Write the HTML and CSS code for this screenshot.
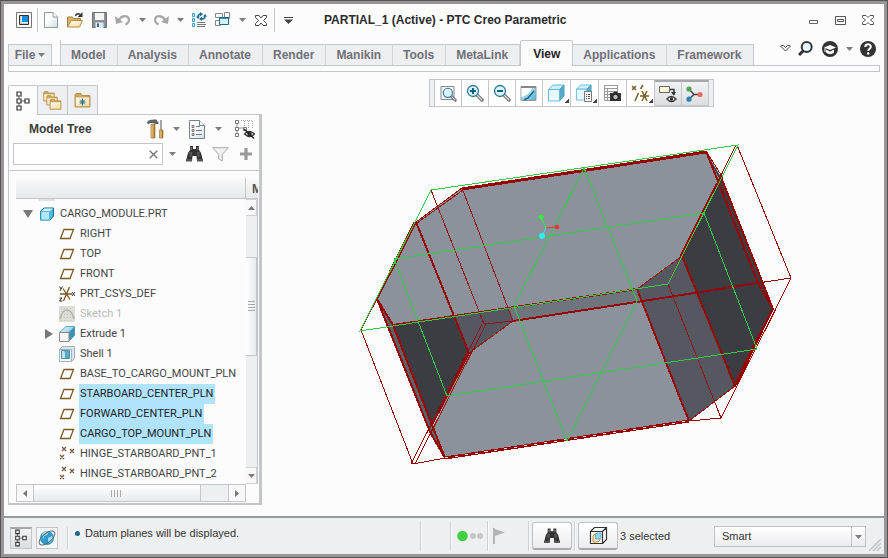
FILE: index.html
```html
<!DOCTYPE html>
<html lang="en">
<head>
<meta charset="utf-8">
<title>PARTIAL_1 (Active) - PTC Creo Parametric</title>
<link rel="stylesheet" href="styles.css">
</head>
<body>
<svg class="defs" aria-hidden="true">
  <defs>
    <linearGradient id="gPaper" x1="0" y1="0" x2="1" y2="1"><stop offset="0.4" stop-color="#fff"/><stop offset="1" stop-color="#cfdde6"/></linearGradient>
    <linearGradient id="gFolder" x1="0" y1="0" x2="1" y2="1"><stop offset="0" stop-color="#fffaf0"/><stop offset="1" stop-color="#f8dc9c"/></linearGradient>
    <linearGradient id="gBlue" x1="0" y1="0" x2="1" y2="1"><stop offset="0" stop-color="#eaf8fd"/><stop offset="1" stop-color="#4fb0d4"/></linearGradient>
    <linearGradient id="gBin" x1="0" y1="0" x2="1" y2="0"><stop offset="0" stop-color="#222"/><stop offset="0.5" stop-color="#999"/><stop offset="1" stop-color="#222"/></linearGradient>
    <linearGradient id="gWood" x1="0" y1="0" x2="1" y2="0"><stop offset="0" stop-color="#f6d48a"/><stop offset="1" stop-color="#a8742a"/></linearGradient>
  </defs>
  <symbol id="caret" viewBox="0 0 7 4"><path d="M0 0h7L3.500 4z" fill="#7d7d7d"/></symbol>
  <symbol id="tree" viewBox="0 0 16 20"><path d="M4 5v10M6 10h5" stroke="#666" stroke-width="1"/><g fill="#fff" stroke="#333" stroke-width="1.200"><path d="M2 1h4v4H2zM2 8h4v4H2zM10 8h4v4h-4zM2 15h4v4H2z"/></g></symbol>
  <symbol id="folder" viewBox="0 0 17 15"><path d="M1 14V1.500L2 .5h5l1 2h8V14z" fill="#cda85e" stroke="#a87f38" stroke-width=".8"/><path d="M1.500 4h14v9.500h-14z" fill="url(#gFolder)" stroke="#c39a52" stroke-width=".7"/></symbol>
  <symbol id="bino" viewBox="0 0 17 16"><path d="M4 0h3v3h3V0h3v4l2 3 2 8h-6l-.5-5h-4L6 15H0l2-8 2-3z" fill="#333"/><path d="M4 1h2v3h-2zM11 1h2v3h-2zM3 6h3l-1 5H1.500zM11 6h3l1.500 5H12z" fill="url(#gBin)"/><path d="M0 13h6v2.500H0zM11 13h6v2.500h-6z" fill="#555"/></symbol>
  <symbol id="plane" viewBox="0 0 16 16"><path d="M5 3.500h9.500L11 12.500H1.500z" fill="#fff" stroke="#7b5a22" stroke-width="1.300"/></symbol>
  <symbol id="points" viewBox="0 0 16 16"><path d="M3 1l4 4M7 1L3 5M11 3l4 4M15 3l-4 4M1 9l4 4M5 9l-4 4" stroke="#75582e" stroke-width="1.300"/></symbol>
  <symbol id="lens" viewBox="0 0 18 18"><path d="M11 11l5 5" stroke="#777" stroke-width="3.500" stroke-linecap="round"/><path d="M11 11l5 5" stroke="#ddd" stroke-width="1.200"/><circle cx="7" cy="7" r="5.500" fill="#d9f3fc" stroke="#2a7896" stroke-width="1.300"/></symbol>
  <symbol id="box" viewBox="0 0 18 18"><path d="M1.500 5.500L6 1h11l-4.500 4.500z" fill="#cdf0fb" stroke="#67bbd9"/><path d="M12.500 5.500L17 1v11l-4.500 5z" fill="#56a9cc" stroke="#4a9dc2"/><path d="M1.500 5.500h11V17h-11z" fill="#e8faff" stroke="#67bbd9"/></symbol>
</svg>

<div class="window">
  <header class="titlebar">
    <button class="app-icon" aria-label="Application menu"><svg width="16" height="16" viewBox="0 0 16 16"><path d="M.5.500h15v15H.5z" fill="#fff" stroke="#777"/><path d="M3.500 3.500h9v9h-9z" fill="#fff" stroke="#333"/><path d="M6 4h6v6H6z" fill="#1690dc"/><path d="M4 4h1.500v6.500H12V12H4z" fill="#c2d4dd"/></svg></button>
    <span class="divider"></span>
    <button class="quick" aria-label="New"><svg width="14" height="16" viewBox="0 0 14 16"><path d="M.5.500h8.500L13.500 5v10.500H.5z" fill="url(#gPaper)" stroke="#8b9aa3"/><path d="M9 .5V5h4.500" fill="#fff" stroke="#8b9aa3"/></svg></button>
    <button class="quick" aria-label="Open"><svg width="16" height="16" viewBox="0 0 16 16"><path d="M.5 15V5h5l1 1.500h7V9" fill="#d6b470" stroke="#a9803a"/><path d="M.7 15L4 8.500h11.500L12.500 15z" fill="url(#gFolder)" stroke="#b58a40"/><path d="M8.500 4C9 2 11 1 13 2.500" fill="none" stroke="#333" stroke-width="1.500"/><path d="M15.500 0v5h-5z" fill="#333"/></svg></button>
    <button class="quick" aria-label="Save"><svg width="15" height="16" viewBox="0 0 15 16"><path d="M.5.500h14v15h-14z" fill="#8b9196" stroke="#6b6f72"/><path d="M3 1h9v7H3z" fill="#f4f4f4"/><path d="M3.500 10.500h8V16h-8z" fill="#d7eff7"/><path d="M5 11.500h2V15H5z" fill="#51606a"/></svg></button>
    <button class="quick" aria-label="Undo"><svg width="16" height="12" viewBox="0 0 16 12"><path d="M3 7.500C5.500 2 11 .5 13.500 4c1.300 2.500 0 5-3 6.500" fill="none" stroke="#a6a6a6" stroke-width="2.200"/><path d="M0 2l1 8 7-2z" fill="#a6a6a6"/></svg></button>
    <button class="quick narrow" aria-label="Undo list"><svg class="caret"><use href="#caret"/></svg></button>
    <button class="quick" aria-label="Redo"><svg width="16" height="12" viewBox="0 0 16 12"><path d="M13 7.500C10.500 2 5 .5 2.500 4c-1.300 2.500 0 5 3 6.500" fill="none" stroke="#a6a6a6" stroke-width="2.200"/><path d="M16 2l-1 8-7-2z" fill="#a6a6a6"/></svg></button>
    <button class="quick narrow" aria-label="Redo list"><svg class="caret"><use href="#caret"/></svg></button>
    <button class="quick" aria-label="Regenerate"><svg width="16" height="16" viewBox="0 0 16 16"><path d="M1.500 1.500h2v3h-2zM1.500 6.500h2v3h-2zM1.500 11.500h2v3h-2z" fill="#fff" stroke="#2a9ac9"/><path d="M6 10.500h8M6 12.500h9M6 14.500h8" stroke="#777"/><path d="M7 5c0-2 1-3 3-3M14 4c0 2-1.500 3-3 3" fill="none" stroke="#176a8b" stroke-width="1.500"/><path d="M9 0l3 2-3 2.500zM11 4.500L8 7l3 2zM5 4.500h4L7 7zM12 4.500h4L14 2z" fill="#176a8b"/></svg></button>
    <button class="quick" aria-label="Windows"><svg width="16" height="16" viewBox="0 0 16 16"><path d="M.5 1.500h7v4h-7zM9.500 .5h5v6h-5zM.5 8.500h5v5h-5z" fill="#fff" stroke="#888"/><path d="M4.500 5.500h9v7h-9z" fill="#d9f3fc" stroke="#176a8b"/><path d="M4.500 6h9" stroke="#176a8b" stroke-width="1.500"/></svg></button>
    <button class="quick narrow" aria-label="Window list"><svg class="caret"><use href="#caret"/></svg></button>
    <button class="quick" aria-label="Close window"><svg width="12" height="11" viewBox="0 0 12 11"><path d="M.5.500h3.500l2 2.500 2-2.500h3.500v2L8.500 5.500l3 3v2H8L6 8l-2 2.500H.5v-2l3-3-3-3z" fill="#fff" stroke="#444"/></svg></button>
    <span class="divider"></span>
    <button class="quick more" aria-label="Customize toolbar"><svg width="9" height="7" viewBox="0 0 9 7"><path d="M0 0h9v1H0zM0 2.500h9L4.500 7z" fill="#444"/></svg></button>
    <h1>PARTIAL_1 (Active) - PTC Creo Parametric</h1>
    <button class="winbtn" aria-label="Minimize"><svg width="10" height="10" viewBox="0 0 10 10"><path d="M.5 5.500h8v3h-8z" fill="#fff" stroke="#666"/></svg></button>
    <button class="winbtn" aria-label="Maximize"><svg width="11" height="9" viewBox="0 0 11 9"><path d="M.5.500h10v8H.5zM2.500 3.500h6v2h-6z" fill="#fff" stroke="#555"/></svg></button>
    <button class="winbtn" aria-label="Close"><svg width="12" height="10" viewBox="0 0 12 10"><path d="M.5.500h3.500l2 2 2-2h3.500v2L8.500 5l3 2.500v2H8l-2-2-2 2H.5v-2L3.500 5l-3-2.500z" fill="#fff" stroke="#555"/></svg></button>
  </header>

  <nav class="ribbon" aria-label="Ribbon">
    <button class="tab file">File <svg class="caret"><use href="#caret"/></svg></button>
    <div class="tabs">
      <button class="tab">Model</button><button class="tab">Analysis</button><button class="tab">Annotate</button><button class="tab">Render</button><button class="tab">Manikin</button><button class="tab">Tools</button><button class="tab">MetaLink</button><button class="tab active">View</button><button class="tab">Applications</button><button class="tab">Framework</button>
    </div>
    <div class="ribbon-tools">
      <button aria-label="Minimize ribbon"><svg width="11" height="7" viewBox="0 0 11 7"><path d="M.5 1l1-.5h2l2 2 2-2h2l1 .5-5 5z" fill="#fff" stroke="#444"/></svg></button>
      <button aria-label="Search commands"><svg width="15" height="15" viewBox="0 0 15 15"><path d="M5.500 9.500L1 14" stroke="#333" stroke-width="3"/><circle cx="8.700" cy="6" r="5" fill="#e8f8ff" stroke="#333" stroke-width="2"/></svg></button>
      <button aria-label="Learning"><svg width="16" height="16" viewBox="0 0 16 16"><circle cx="8" cy="8" r="8" fill="#333"/><path d="M2 6.500L8 4l6 2.500L8 9z" fill="#fff"/><path d="M4 8.500v3c2.500 2 5.500 2 8 0v-3L8 10.500z" fill="#fff"/><path d="M3 7v4" stroke="#fff"/></svg></button>
      <button aria-label="Learning list"><svg class="caret"><use href="#caret"/></svg></button>
      <button aria-label="Help"><svg width="16" height="16" viewBox="0 0 16 16"><circle cx="8" cy="8" r="8" fill="#333"/><path d="M5.300 6c0-3.500 5.500-3.500 5.500-.3 0 2-2.600 2-2.600 4.300" fill="none" stroke="#fff" stroke-width="2"/><circle cx="8.200" cy="12.500" r="1.200" fill="#fff"/></svg></button>
    </div>
  </nav>
  <div class="strip"></div>

  <main class="main">
    <aside class="side">
      <div class="side-tabs">
        <button class="side-tab active" aria-label="Model tree"><svg width="16" height="20"><use href="#tree"/></svg></button>
        <button class="side-tab" aria-label="Folder browser"><svg width="20" height="19" viewBox="0 0 20 19"><use href="#folder" width="12" height="11"/><use href="#folder" x="3" y="4" width="12" height="11"/><use href="#folder" x="6" y="8" width="13" height="11"/></svg></button>
        <button class="side-tab" aria-label="Favorites"><svg width="17" height="15" viewBox="0 0 17 15"><use href="#folder" width="17" height="15"/><path d="M8.500 5.500v7M5.500 9h6M6.200 6.700l4.600 4.600M10.800 6.700l-4.600 4.600" stroke="#176a8b"/></svg></button>
      </div>
      <section class="panel">
        <div class="panel-head">
          <h2>Model Tree</h2>
          <button class="w20" aria-label="Settings"><svg width="17" height="20" viewBox="0 0 17 20"><path d="M0 3C2 .5 8 0 10 1v1l1.500 1v2H8L7 4 3.500 4 1 5.500z" fill="#5d6268"/><path d="M4 5h4v14H4z" fill="url(#gWood)" stroke="#8d6424" stroke-width=".6"/><path d="M14 1v10" stroke="#888" stroke-width="1.500"/><path d="M12.500 11h3.500v8h-3.500z" fill="url(#gWood)" stroke="#8d6424" stroke-width=".6"/></svg></button>
          <button class="w22" aria-label="Settings list"><svg class="caret"><use href="#caret"/></svg></button>
          <button class="w20" aria-label="Show"><svg width="16" height="19" viewBox="0 0 16 19"><path d="M.5.500h10l5 5v13H.5z" fill="url(#gPaper)" stroke="#71828c"/><path d="M10.500.500v5h5" fill="#fff" stroke="#71828c"/><path d="M3 5.500h2v2H3zM3 9.500h2v2H3zM3 13.500h2v2H3z" fill="none" stroke="#555" stroke-width=".8"/><path d="M7 6.500h4M7 10.500h6M7 14.500h6" stroke="#777"/></svg></button>
          <button class="w22" aria-label="Show list"><svg class="caret"><use href="#caret"/></svg></button>
          <button class="w30" aria-label="Hide tree items"><svg width="21" height="20" viewBox="0 0 21 20"><path d="M3 4v10M5 9h4" stroke="#999"/><path d="M1.500 1.500h3v3h-3zM1.500 8.500h3v3h-3zM1.500 14.500h3v3h-3zM9.500 8.500h3v3h-3z" fill="#fff" stroke="#777"/><path d="M7 1.500h12M10.500 2v5M14.500 2v7M18.500 2v8" stroke="#aaa" stroke-dasharray="1 1"/><path d="M10.500 15q4.500-5 10 0-4.500 5-10 0z" fill="#fff" stroke="#333" stroke-width="1.300"/><circle cx="15.500" cy="15" r="2.300" fill="#333"/><path d="M10 10l10 9.500" stroke="#222" stroke-width="1.400"/></svg></button>
        </div>
        <div class="search">
          <div class="search-box"><input type="text" id="q" aria-label="Search model tree"><button aria-label="Clear"><svg width="9" height="9" viewBox="0 0 9 9"><path d="M.7.700l7.600 7.600M8.300.700L.7 8.300" stroke="#777" stroke-width="1.400"/></svg></button></div>
          <button class="w18" aria-label="Search options"><svg class="caret"><use href="#caret"/></svg></button>
          <button class="w26" aria-label="Find"><svg width="17" height="16"><use href="#bino"/></svg></button>
          <button class="w26" aria-label="Filter"><svg width="17" height="15" viewBox="0 0 17 15"><path d="M.7.700h15.600l-6 6.800V14l-3.600-2V7.500z" fill="#f1f1f1" stroke="#aaa"/></svg></button>
          <button class="w26" aria-label="Add"><svg width="12" height="12" viewBox="0 0 12 12"><path d="M6 0v12M0 6h12" stroke="#999" stroke-width="3.200"/></svg></button>
        </div>
        <div class="tree">
          <div class="col-head"><span class="col-name"></span><b>M</b></div>
          <div class="tree-body">
            <ul class="rows">
              <li class="root"><svg class="twist" viewBox="0 0 10 8"><path d="M0 0h10L5 8z" fill="#777"/></svg><svg class="ico" viewBox="0 0 16 16"><path d="M1.500 5L5 2h9.500v8L11 14H1.500z" fill="#50b5df" stroke="#176a8b"/><path d="M2 5.500h8.500V14H2z" fill="#aee8fa" stroke="#57b9df"/><path d="M2.500 5L5.500 2.500H14l-3.200 2.500z" fill="#cff4fd"/></svg><span>CARGO_MODULE.PRT</span></li>
              <li><svg class="ico"><use href="#plane"/></svg><span>RIGHT</span></li>
              <li><svg class="ico"><use href="#plane"/></svg><span>TOP</span></li>
              <li><svg class="ico"><use href="#plane"/></svg><span>FRONT</span></li>
              <li><svg class="ico" viewBox="0 0 16 16"><path d="M1 8h12M4 2.500l7 11M10.500 1L4.500 15" stroke="#7b5a22" stroke-width="1.300"/><path d="M.5.500l1.500 2.500L3.500.500M2 3L1 5M13 6l3 4M16 6l-3 4M.5 12H3L.5 15H3.500" fill="none" stroke="#333"/></svg><span>PRT_CSYS_DEF</span></li>
              <li class="dim"><svg class="ico" viewBox="0 0 16 16"><path d="M0 0h16v16H0z" fill="#deded9"/><path d="M2 2.500h12M2 5.500h12M2 8.500h12M2 11.500h12M2 14.500h12" stroke="#c2c2bd" stroke-dasharray="1 2"/><path d="M1 13C4 1 12 1 15 13" fill="none" stroke="#b8b6a6" stroke-width="1.600"/></svg><span>Sketch 1</span></li>
              <li class="has-kids"><svg class="twist" viewBox="0 0 8 10"><path d="M0 0v10l8-5z" fill="#777"/></svg><svg class="ico" viewBox="0 0 16 16"><path d="M1 6l6-5.500h8.500v9L10 15" fill="url(#gBlue)" stroke="#66a0b6"/><path d="M10 6l5.500-5.500v9L10 15z" fill="#3d93b4"/><path d="M.5 6.500H10v9H.5z" fill="#f5f5f5" stroke="#888"/></svg><span>Extrude 1</span></li>
              <li><svg class="ico" viewBox="0 0 16 16"><path d="M.5 3.500l3-3h12v12l-3 3H.5z" fill="#d5e5ec" stroke="#a5b1b6"/><path d="M.5 3.500h12v12H.5z" fill="#f7fafb" stroke="#a5b1b6"/><path d="M2.500 4.500h8v8h-8z" fill="#57a9c6" stroke="#4f8ea5"/><path d="M3 5h2l1 2v5H3z" fill="#bfe4ef"/></svg><span>Shell 1</span></li>
              <li><svg class="ico"><use href="#plane"/></svg><span>BASE_TO_CARGO_MOUNT_PLN</span></li>
              <li class="sel"><svg class="ico"><use href="#plane"/></svg><span>STARBOARD_CENTER_PLN</span></li>
              <li class="sel"><svg class="ico"><use href="#plane"/></svg><span>FORWARD_CENTER_PLN</span></li>
              <li class="sel"><svg class="ico"><use href="#plane"/></svg><span>CARGO_TOP_MOUNT_PLN</span></li>
              <li><svg class="ico"><use href="#points"/></svg><span>HINGE_STARBOARD_PNT_1</span></li>
              <li><svg class="ico"><use href="#points"/></svg><span>HINGE_STARBOARD_PNT_2</span></li>
            </ul>
            <div class="vscroll">
              <button aria-label="Scroll up"><svg width="7" height="4" viewBox="0 0 7 4"><path d="M0 4h7L3.500 0z" fill="#777"/></svg></button>
              <div class="vtrack"><div class="vthumb"><svg width="7" height="11" viewBox="0 0 7 11"><path d="M0 .5h7M0 3.500h7M0 6.500h7M0 9.500h7" stroke="#aaa"/></svg></div></div>
              <button aria-label="Scroll down"><svg class="caret"><use href="#caret"/></svg></button>
            </div>
            <div class="hscroll">
              <button aria-label="Scroll left"><svg width="4" height="7" viewBox="0 0 4 7"><path d="M4 0v7L0 3.500z" fill="#777"/></svg></button>
              <div class="htrack"><div class="hthumb"><svg width="11" height="7" viewBox="0 0 11 7"><path d="M.5 0v7M3.500 0v7M6.500 0v7M9.500 0v7" stroke="#aaa"/></svg></div></div>
              <button aria-label="Scroll right"><svg width="4" height="7" viewBox="0 0 4 7"><path d="M0 0v7l4-3.500z" fill="#777"/></svg></button>
            </div>
          </div>
        </div>
      </section>
    </aside>

    <section class="view">
      <div class="gfx-bar" role="toolbar" aria-label="Graphics">
        <span class="grip"></span>
        <button aria-label="Refit"><svg width="18" height="18" viewBox="0 0 18 18"><path d="M2 2.500h13v13H2z" fill="#f5f5f5" stroke="#888"/><use href="#lens" x="3" y="3" width="15" height="15"/></svg></button>
        <button aria-label="Zoom in"><svg width="18" height="18" viewBox="0 0 18 18"><use href="#lens"/><path d="M7 4v6M4 7h6" stroke="#0d6184" stroke-width="2"/></svg></button>
        <button aria-label="Zoom out"><svg width="18" height="18" viewBox="0 0 18 18"><use href="#lens"/><path d="M4 7h6" stroke="#0d6184" stroke-width="2"/></svg></button>
        <button aria-label="Repaint"><svg width="17" height="17" viewBox="0 0 17 17"><path d="M1 1.500h15v14H1z" fill="url(#gBlue)" stroke="#999"/><path d="M1.500 3H12Q10 9 4 11l-2.500 1z" fill="#fff"/><path d="M1 2h15" stroke="#888" stroke-width="2"/><path d="M14 6l-6 7-4 2" fill="none" stroke="#176a8b" stroke-width="1.500"/></svg></button>
        <button class="drop" aria-label="Display style"><svg width="18" height="18"><use href="#box"/></svg></button>
        <button class="drop" aria-label="Saved orientations"><svg width="18" height="18" viewBox="0 0 18 18"><use href="#box" width="17" height="17"/><path d="M9.500 7.500h7v10h-7z" fill="#fff" stroke="#777"/><path d="M11 10.500h1M13 10.500h2M11 12.500h1M13 12.500h2M11 14.500h1M13 14.500h2" stroke="#555"/></svg></button>
        <button class="wide" aria-label="View manager"><svg width="18" height="18" viewBox="0 0 18 18"><path d="M1.500 1.500h13v15h-13zM1 4.500h13M1 7.500h13M1 10.500h7M1 13.500h7M4.500 4v12" fill="none" stroke="#999"/><path d="M7 9h3l1-1.500h3L15 9h3v8H7z" fill="#333"/><circle cx="12.500" cy="13" r="2.800" fill="#bbb" stroke="#111"/></svg></button>
        <button class="drop" aria-label="Datum display"><svg width="19" height="18" viewBox="0 0 19 18"><path d="M1 2l4 4M5 2L1 6M12 1L9.500 5M7.500 9L4 17M9 12h9M11 7l5 10M16 7l-5 10" stroke="#7b5a22" stroke-width="1.500"/></svg></button>
        <button class="on" aria-label="Annotation display"><svg width="18" height="18" viewBox="0 0 18 18"><path d="M.5 1.500h10v6h-10z" fill="#fff5d7" stroke="#666"/><path d="M11 4.500h4V10" fill="none" stroke="#333" stroke-width="1.400"/><path d="M12 7h5l-2.500 3.500z" fill="#333"/><path d="M8 14q4-5 9 0-4.500 5-9 0z" fill="#fff" stroke="#333" stroke-width="1.300"/><circle cx="12.500" cy="14" r="1.700" fill="#333"/></svg></button>
        <button class="on" aria-label="Spin center"><svg width="17" height="16" viewBox="0 0 17 16"><path d="M3 3l5 5.500L3 13M8 8.500h6" fill="none" stroke="#444" stroke-width="1.500"/><circle cx="3" cy="3" r="2.600" fill="#4ca64c"/><circle cx="14" cy="8.500" r="2.600" fill="#e96a62"/><circle cx="3" cy="13.200" r="2.600" fill="#2c85b8"/></svg></button>
        <span class="grip"></span>
      </div>
      <svg class="scene" viewBox="262 107 622 409" role="img" aria-label="Cargo module part with datum planes">
        <g stroke="none">
          <path d="M416 222L462 188 706 152 720 181 682 256 637 289 393 325 377 299z" fill="#8b929b"/>
          <path d="M513 321L643 301 689 421 445 458 431 430 469 353z" fill="#8b929b"/>
          <path d="M508 308L637 289 643 301 513 321z" fill="#6f757c"/>
          <path d="M453 316L508 308 513 321 469 353z" fill="#555860"/>
          <path d="M393 325L453 316 469 353 432 425z" fill="#3b3d42"/>
          <path d="M377 299L393 325 445 458 430 432z" fill="#5d6168"/>
          <path d="M682 256L637 289 689 421 735 386z" fill="#555860"/>
          <path d="M682 256L720 181 706 152 721 177 773 309 735 386z" fill="#3b3d42"/>
        </g>
        <g class="edge thin">
          <path d="M431 190L484 324M462 188L513 321M361 330L413 464M484 324L513 321M482 324L411 464M486 324L415 464M413 464L445 458M689 421L721 418L791 278L737 145M721 418L668 284M758 283L791 278M682 256L637 289M680 256L736 145L668 283M462 188L416 222M463 190L417 223M469 353L513 321M735 386L689 421M416 222L361 330M414 222L377 297M706 151L723 178M773 307L733 386M776 309L737 385"/>
        </g>
        <g class="edge thick">
          <path d="M377 299L430 432L445 458L393 325zM416 222L469 353M416 222L377 299M393 325L637 289M513 321L643 301 758 283M637 289L689 421M682 256L735 386L773 309L721 177M706 151L758 283L773 309M469 353L432 425M719 180L682 256"/>
        </g>
        <g class="edge heavy"><path d="M462 189L706 152M445 458L689 421"/></g>
        <g class="spark"><path d="M462 187L706 150M445 458L689 421"/></g>
        <g class="datum">
          <path d="M360 331L431 190 738 145 668 284zM394 259L704 213 757 349 447 396zM584 168L637 301 567 441 514 306z"/>
        </g>
        <path d="M546 228L541 217" stroke="#2ef23c"/><path d="M546 228L557 227" stroke="#f53434"/><path d="M546 228L542 236" stroke="#2cf0f7"/>
        <circle cx="541" cy="217" r="2.500" fill="#2ef23c"/><circle cx="557" cy="227" r="2.300" fill="#f53434"/><circle cx="542" cy="236" r="3" fill="#2cf0f7"/>
      </svg>
    </section>
  </main>

  <footer class="status">
    <button class="flat pressed" aria-label="Toggle navigator"><svg width="14" height="18"><use href="#tree"/></svg></button>
    <button class="flat" aria-label="Toggle browser"><svg width="18" height="18" viewBox="0 0 18 18"><circle cx="9" cy="9" r="7" fill="#2d9bd0"/><path d="M4 5q3-4 7-2l-2 3-3 1-1 4zM10 9l4-2 1 3-3 4-2-1z" fill="#a6dcf1"/><ellipse cx="9" cy="9" rx="9.500" ry="4.500" transform="rotate(-40 9 9)" fill="none" stroke="#666"/></svg></button>
    <span class="sep"></span>
    <p class="msg">Datum planes will be displayed.</p>
    <span class="sep"></span>
    <span class="cell"></span>
    <span class="sep"></span>
    <span class="cell lights"><svg width="27" height="12" viewBox="0 0 27 12"><circle cx="5.500" cy="6" r="5.300" fill="#43cf43"/><circle cx="16" cy="6" r="3" fill="#c6c7c8"/><circle cx="23" cy="6" r="3" fill="#c6c7c8"/></svg></span>
    <span class="sep"></span>
    <span class="cell flag"><svg width="12" height="17" viewBox="0 0 12 17"><path d="M0 0h2v16H0zM2 1l10 3.500L2 8z" fill="#b4b5b7"/></svg></span>
    <span class="sep"></span>
    <button class="raised" aria-label="Find"><svg width="16" height="16"><use href="#bino"/></svg></button>
    <span class="sep"></span>
    <button class="raised" aria-label="Selection"><svg width="19" height="19" viewBox="0 0 19 19"><path d="M1.500 5.500h12v12h-12zM1.500 5.500l4-4h12v12l-4 4M13.500 5.500l4-4" fill="#fff" stroke="#333" stroke-width="1.200"/><path d="M4 10l2-2h5v6l-2 2H4z" fill="#f6e6bd" stroke="#c28a2c"/><path d="M6.500 8.500l1.500-1.500h4v4.500L10.500 13h-4z" fill="#8fd6f0" stroke="#3aa0cb" stroke-width=".7"/></svg></button>
    <span class="count">3 selected</span>
    <span class="filter"><select aria-label="Selection filter"><option>Smart</option></select><svg class="caret"><use href="#caret"/></svg></span>
    <svg class="resize" width="12" height="12" viewBox="0 0 12 12"><path d="M0 12L12 0M4 12l8-8M8 12l4-4" stroke="#c2c3c5" stroke-width="1.500"/></svg>
  </footer>
</div>
</body>
</html>
```
FILE: styles.css
```css
* { box-sizing: border-box; }

body {
  margin: 0;
  font: 12px "Liberation Sans", Arial, sans-serif;
  color: #333;
  background: #fcfcfc;
}

button {
  display: flex;
  align-items: center;
  justify-content: center;
  margin: 0;
  padding: 0;
  border: 0;
  background: none;
  font: inherit;
  color: inherit;
}

svg { display: block; flex: none; }
h1, h2, p, ul { margin: 0; padding: 0; font-size: 12px; }
.defs { position: absolute; width: 0; height: 0; }
.caret { width: 7px; height: 4px; }

.window {
  display: flex;
  flex-direction: column;
  height: 100vh;
  border: 1px solid #555354;
  box-shadow: inset 0 0 0 3px #979596;
  padding: 3px;
}

/* Title bar */
.titlebar {
  display: flex;
  align-items: center;
  height: 32px;
  padding: 0 3px 0 12px;
  flex: none;
}
.app-icon { margin-right: 4px; }
.divider { width: 1px; height: 24px; margin: 0 1px; background: #c9cacc; }
.quick { width: 24px; height: 24px; }
.quick.narrow { width: 14px; }
.titlebar h1 { flex: 1; padding-left: 24px; color: #2b2b2b; white-space: nowrap; }
.winbtn { width: 27px; height: 24px; }

/* Ribbon */
.ribbon {
  display: flex;
  align-items: flex-end;
  height: 29px;
  flex: none;
  padding: 0 4px;
}
.tabs { display: flex; align-items: flex-end; border-left: 1px solid #c4c6ca; margin-left: 8px; }
.tab {
  height: 21px;
  padding: 0 11px 0 10px;
  border-top: 1px solid #c4c6ca;
  border-right: 1px solid #d2d4d8;
  background: #eeeff2;
  font-weight: bold;
  color: #707078;
}
.tab.file { width: 44px; gap: 3px; padding: 0; border: 1px solid #c4c6ca; border-bottom: 0; }
.tab:last-child { padding-right: 12px; border-right-color: #c4c6ca; }
.tab.active {
  position: relative;
  height: 26px;
  margin-bottom: -1px;
  padding: 0 12px;
  border: 1px solid #c4c6ca;
  border-bottom: 0;
  border-radius: 2px 2px 0 0;
  background: #fcfcfc;
  color: #222;
}
.ribbon-tools { display: flex; align-self: center; gap: 5px; margin-left: auto; margin-right: 4px; padding-bottom: 4px; }
.ribbon-tools button { min-width: 11px; height: 18px; }
.ribbon-tools button:nth-child(2) { margin-left: 2px; }
.ribbon-tools button:nth-child(3) { margin-left: 4px; }
.ribbon-tools button:nth-child(4) { margin-left: 1px; }
.strip { height: 7px; margin: 0 4px; border: 1px solid #c4c6ca; flex: none; }

/* Work area */
.main { display: flex; flex: 1; min-height: 0; }
.side {
  display: flex;
  flex-direction: column;
  width: 254px;
  margin: 13px 0 11px 4px;
  flex: none;
}
.side-tabs { display: flex; height: 30px; flex: none; }
.side-tab {
  width: 31px;
  height: 29px;
  margin-right: -1px;
  border: 1px solid #c4c6ca;
  border-bottom: 0;
  border-radius: 2px 2px 0 0;
  background: #eeeff2;
}
.side-tab.active { position: relative; width: 30px; height: 30px; background: #fcfcfc; }
.panel {
  display: flex;
  flex-direction: column;
  flex: 1;
  min-height: 0;
  margin-top: -1px;
  border: 1px solid #c4c6ca;
  border-right-width: 3px;
  border-bottom-width: 2px;
}
.panel-head { display: flex; align-items: center; height: 28px; flex: none; }
.panel-head h2 { flex: 1; padding-left: 20px; font-size: 12px; color: #3c3c3c; }
.w18, .w20, .w22, .w26, .w30 { flex: none; }
.w18 { width: 18px; }
.w20 { width: 20px; }
.w22 { width: 22px; }
.w26 { width: 26px; }
.w30 { width: 30px; }
.search {
  display: flex;
  align-items: center;
  height: 28px;
  padding: 0 0 5px 4px;
  border-bottom: 1px solid #c4c6ca;
  flex: none;
}
.search-box { display: flex; flex: 1; min-width: 0; height: 22px; border: 1px solid #c4c6ca; background: #fff; }
.search-box input { flex: 1; min-width: 0; border: 0; padding: 0 4px; background: none; font: inherit; }
.search-box button { width: 18px; }

/* Model tree */
.tree { display: flex; flex-direction: column; flex: 1; min-height: 0; margin: 7px 1px 1px 7px; }
.col-head {
  display: flex;
  height: 21px;
  overflow: hidden;
  border-bottom: 1px solid #c4c6ca;
  background: linear-gradient(#fafafa, #e8e9eb);
  line-height: 22px;
  flex: none;
}
.col-name { flex: 1; border-right: 1px solid #c4c6ca; }
.col-head b { width: 12px; padding-left: 6px; overflow: hidden; color: #555; }
.tree-body {
  display: grid;
  grid-template: 1fr 18px / 1fr 12px;
  flex: 1;
  min-height: 0;
}
.rows {
  min-height: 0;
  overflow: hidden;
  padding-top: 5px;
  list-style: none;
  font: 11px Roboto, sans-serif;
  color: #444;
  background: linear-gradient(#e0e1e3, #e0e1e3) 23px 0 / 16px 2px no-repeat;
}
.rows li { display: flex; align-items: center; height: 20px; padding-left: 43px; white-space: nowrap; }
.rows li.root { padding-left: 7px; }
.rows li.has-kids { padding-left: 29px; }
.rows span { padding: 0 2px 0 1px; margin-left: 4px; line-height: 20px; }
.rows .ico { width: 16px; height: 16px; }
.root .twist { width: 10px; height: 8px; margin-right: 6px; }
.has-kids .twist { width: 8px; height: 10px; margin-right: 6px; }
.dim span { color: #b9b9b9; }
.sel span { background: #b0e3fd; color: #222; }

.vscroll { display: flex; flex-direction: column; background: #eeeff2; border-right: 1px solid #c4c6ca; }
.vscroll button { height: 17px; flex: none; border: 1px solid #d0d2d5; border-left: 0; background: #f8f8f9; }
.vtrack { display: flex; flex-direction: column; flex: 1; padding-top: 41px; }
.vthumb {
  display: flex;
  align-items: center;
  justify-content: center;
  height: 99px;
  border: 1px solid #c4c6ca;
  border-left: 0;
  background: linear-gradient(90deg, #fff, #e9eaec);
}
.hscroll { display: flex; border: 1px solid #c4c6ca; background: #eeeff2; }
.hscroll button { width: 16px; flex: none; background: #f8f8f9; }
.htrack { flex: 1; border: solid #c4c6ca; border-width: 0 1px; }
.hthumb {
  display: flex;
  align-items: center;
  justify-content: center;
  width: 86%;
  height: 16px;
  border-right: 1px solid #c4c6ca;
  background: linear-gradient(#fff, #e9eaec);
}

/* Graphics area */
.view { display: flex; flex-direction: column; align-items: center; flex: 1; min-width: 0; }
.gfx-bar {
  display: flex;
  height: 28px;
  margin: 7px 4px 0 0;
  border: 1px solid #c4c6ca;
  background: #fff;
  flex: none;
}
.gfx-bar button { position: relative; width: 27px; border-right: 1px solid #c4c6ca; }
.gfx-bar button.drop, .gfx-bar button.wide { width: 28px; }
.gfx-bar button.on {
  border: 1px solid #c4c6ca;
  border-left: 0;
  border-top: 2px solid #a5a7ab;
  background: linear-gradient(#f2f3f4, #dcdee1);
}
.gfx-bar .drop::after {
  content: "";
  position: absolute;
  right: 1px;
  bottom: 3px;
  width: 4px;
  height: 4px;
  background: linear-gradient(135deg, transparent 50%, #444 50%);
}
.grip { width: 5px; background: #eeeff2; border-right: 1px solid #c4c6ca; }
.grip:last-child { width: 4px; border: 0; }
.scene { flex: 1; width: 100%; min-height: 0; fill: none; }
.edge, .datum, .spark { shape-rendering: crispEdges; }
.edge { stroke: #990000; }
.thin { stroke-width: 1px; }
.thick { stroke-width: 2px; }
.heavy { stroke-width: 3px; }
.spark { stroke: #f3dede; stroke-dasharray: 3 7; }
.datum { stroke: #32cb46; }

/* Status bar */
.status {
  display: flex;
  align-items: center;
  height: 38px;
  padding: 0 3px 0 6px;
  border-top: 2px solid #97989b;
  background: #eeeff1;
  font-size: 11px;
  flex: none;
}
.flat { width: 22px; height: 22px; margin: 3px 4px 0 0; border: 1px solid #c4c6ca; background: #f6f7f8; }
.pressed { border-top: 2px solid #a5a7ab; background: linear-gradient(#f2f3f4, #dcdee1); }
.sep { width: 2px; height: 30px; border-left: 1px solid #cfd0d3; border-right: 1px solid #fafafa; }
.status > .flat + .sep { height: 22px; margin: 3px 0 0 5px; }
.msg { display: flex; align-items: center; gap: 5px; flex: 1; padding: 0 0 6px 6px; font-size: 11px; }
.msg::before { content: ""; width: 5px; height: 5px; border-radius: 50%; background: #1c6787; }
.cell { display: flex; align-items: center; width: 28px; }
.lights { width: 35px; padding-left: 5px; }
.flag { width: 39px; padding-left: 4px; }
.raised {
  width: 40px;
  height: 28px;
  margin: 0 2px;
  border: 1px solid #bfc1c4;
  border-bottom: 2px solid #aaa;
  border-radius: 3px;
  background: linear-gradient(#fff, #ececee);
}
.count { width: 94px; }
.filter { position: relative; width: 152px; }
.filter select {
  width: 100%;
  height: 21px;
  padding: 0 7px;
  border: 1px solid #bfc1c4;
  border-radius: 0;
  appearance: none;
  color: #333;
  background: linear-gradient(#bfc1c4, #bfc1c4) right 13px top / 1px 100% no-repeat, linear-gradient(#fff, #ececef);
  font: inherit;
}
.filter .caret { position: absolute; right: 4px; top: 9px; pointer-events: none; }
.resize { align-self: flex-end; margin: 0 0 3px 3px; }
```
